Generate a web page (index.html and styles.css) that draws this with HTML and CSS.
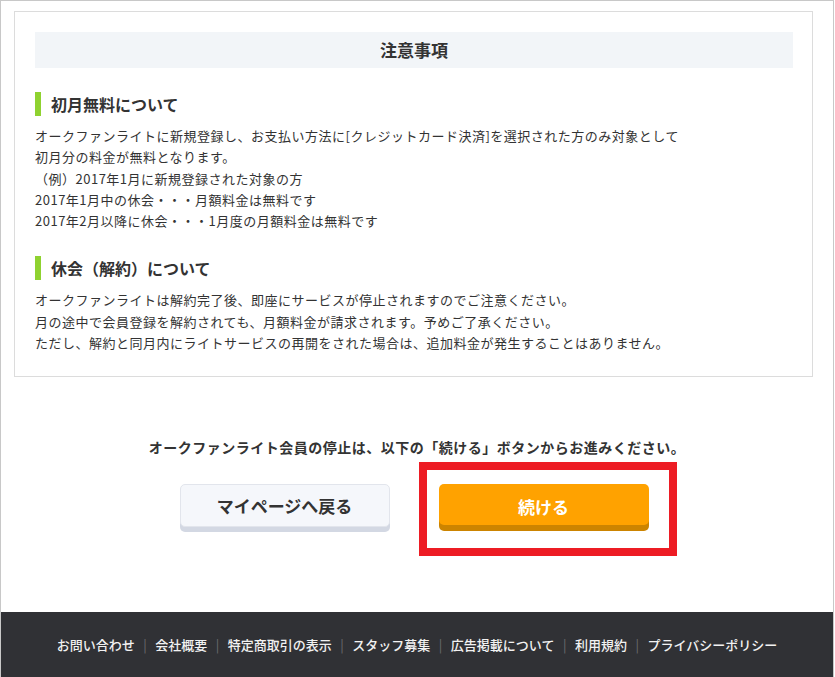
FILE: index.html
```html
<!DOCTYPE html>
<html lang="ja">
<head>
    <meta charset="UTF-8">
    <title>オークファンライト 会員停止</title>
    <link rel="stylesheet" href="styles.css">
</head>
<body>
    <div class="page">
        <div class="notice-box">
            <h2 class="notice-title">注意事項</h2>

            <h3 class="notice-heading">初月無料について</h3>
            <p class="notice-text">
                オークファンライトに新規登録し、お支払い方法に[クレジットカード決済]を選択された方のみ対象として<br>
                初月分の料金が無料となります。<br>
                （例）2017年1月に新規登録された対象の方<br>
                2017年1月中の休会・・・月額料金は無料です<br>
                2017年2月以降に休会・・・1月度の月額料金は無料です
            </p>

            <h3 class="notice-heading">休会（解約）について</h3>
            <p class="notice-text">
                オークファンライトは解約完了後、即座にサービスが停止されますのでご注意ください。<br>
                月の途中で会員登録を解約されても、月額料金が請求されます。予めご了承ください。<br>
                ただし、解約と同月内にライトサービスの再開をされた場合は、追加料金が発生することはありません。
            </p>
        </div>

        <p class="lead">オークファンライト会員の停止は、以下の「続ける」ボタンからお進みください。</p>

        <div class="btn-row">
            <a class="btn btn-back" href="#">マイページへ戻る</a>
            <a class="btn btn-next" href="#">続ける</a>
        </div>

        <footer class="footer">
            <ul class="footer-links">
                <li><a href="#">お問い合わせ</a></li>
                <li><a href="#">会社概要</a></li>
                <li><a href="#">特定商取引の表示</a></li>
                <li><a href="#">スタッフ募集</a></li>
                <li><a href="#">広告掲載について</a></li>
                <li><a href="#">利用規約</a></li>
                <li><a href="#">プライバシーポリシー</a></li>
            </ul>
            <p class="copyright">© 2008 aucfan Co.,Ltd. All Rights Reserved.</p>
        </footer>
    </div>
</body>
</html>
```

FILE: styles.css
```css
* {
    margin: 0;
    padding: 0;
    box-sizing: border-box;
}

body {
    background: #fff;
    color: #333;
    font-family: "Noto Sans CJK JP", "Noto Sans", sans-serif;
    overflow: hidden;
}

.page {
    width: 834px;
    border: 1px solid #c8c8c8;
    border-bottom: none;
    padding-top: 10px;
}

.notice-box {
    margin: 0 20px 0 13px;
    border: 1px solid #dcdcdc;
    padding: 20px 19px 23px 20px;
}

.notice-title {
    background: #f2f5f8;
    height: 36px;
    line-height: 36px;
    text-align: center;
    font-size: 17px;
    font-weight: bold;
    color: #333;
}

.notice-heading {
    margin-top: 24px;
    border-left: 6px solid #8fd230;
    padding-left: 10px;
    height: 24px;
    line-height: 24px;
    font-size: 16px;
    font-weight: bold;
    color: #333;
}

.notice-text {
    margin-top: 9px;
    font-size: 13px;
    line-height: 21.3px;
    letter-spacing: 0.5px;
    color: #333;
}

.notice-text + .notice-heading {
    margin-top: 25px;
}

.lead {
    margin-top: 60px;
    text-align: center;
    font-size: 14px;
    font-weight: bold;
    line-height: 20px;
    letter-spacing: 0.5px;
    color: #333;
}

.btn-row {
    display: flex;
    justify-content: center;
    gap: 49px;
    margin-top: 27px;
    padding-right: 6px;
}

.btn {
    display: block;
    width: 210px;
    height: 43px;
    line-height: 43px;
    border-radius: 5px;
    text-align: center;
    font-size: 17px;
    font-weight: bold;
    text-decoration: none;
}

.btn-back {
    background: #f5f7fb;
    color: #333;
    border: 1px solid #e2e5ec;
    line-height: 42px;
    box-shadow: 0 5px 0 #d3d8e3;
}

.btn-next {
    position: relative;
    height: 41px;
    line-height: 45px;
    background: #ffa200;
    color: #fff;
    box-shadow: 0 6px 0 #cc8400;
}

/* 注目用の赤枠 */
.btn-next::after {
    content: "";
    position: absolute;
    top: -22px;
    left: -20px;
    right: -28px;
    bottom: -31px;
    border: 8px solid #ed1c24;
    pointer-events: none;
}

.footer {
    margin-top: 85px;
    background: #303135;
    padding-top: 22px;
    height: 80px;
}

.footer-links {
    list-style: none;
    display: flex;
    justify-content: center;
    font-size: 13px;
    line-height: 22px;
}

.footer-links li + li::before {
    content: "|";
    color: #6c6d70;
    padding: 0 8.5px;
}

.footer-links a {
    color: #f2f2f2;
    text-decoration: none;
    font-weight: 500;
}

.copyright {
    margin-top: 20px;
    text-align: center;
    font-size: 12px;
    color: #9a9b9e;
}
```
